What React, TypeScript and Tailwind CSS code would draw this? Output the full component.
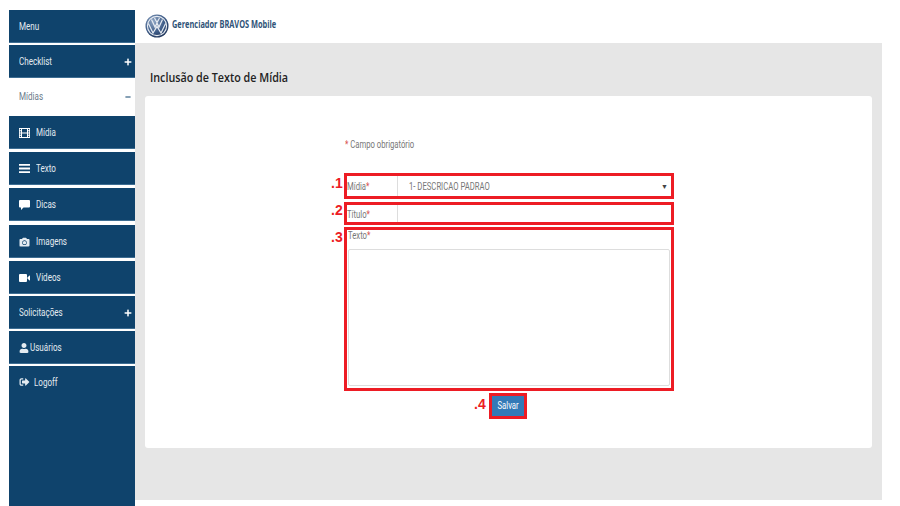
import type { ReactNode } from "react";
import { FaCamera, FaUser, FaSignOutAlt, FaPlus, FaMinus } from "react-icons/fa";

// the original font is a narrow one, none installed, so squeeze Roboto
const T = ({ children, origin = "origin-left" }: { children: ReactNode; origin?: string }) => (
  <span className={`inline-block whitespace-nowrap scale-x-[.7] ${origin}`}>{children}</span>
);

const Logo = () => (
  <svg width="24" height="24" viewBox="0 0 24 24">
    <defs>
      <radialGradient id="vw" cx="35%" cy="30%" r="80%">
        <stop offset="0%" stopColor="#8fa6c4" />
        <stop offset="60%" stopColor="#3c5a86" />
        <stop offset="100%" stopColor="#1b2f52" />
      </radialGradient>
    </defs>
    <circle cx="12" cy="12" r="11.5" fill="url(#vw)" />
    <circle cx="12" cy="12" r="9.6" fill="none" stroke="#e6ebf2" strokeWidth="1.1" />
    <path d="M6.5 5.5 L10 13 L12 9 L14 13 L17.5 5.5 M9.5 4 L12 8.5 L14.5 4 M3.4 9.5 L8 19 L12 12.5 L16 19 L20.6 9.5" fill="none" stroke="#e6ebf2" strokeWidth="1.2" />
  </svg>
);

const FilmIcon = () => (
  <svg width="11" height="10" viewBox="0 0 11 10" className="mr-[6px] shrink-0" fill="#fff">
    <path fillRule="evenodd" d="M0 0h11v10H0z M3 1v3.5h5V1z M3 5.5V9h5V5.5z M.8 1v1.2H2V1z M.8 3.2v1.2H2V3.2z M.8 5.5v1.2H2V5.5z M.8 7.8V9H2V7.8z M9 1v1.2h1.2V1z M9 3.2v1.2h1.2V3.2z M9 5.5v1.2h1.2V5.5z M9 7.8V9h1.2V7.8z" />
  </svg>
);

const ListIcon = () => (
  <svg width="11" height="9" viewBox="0 0 11 9" className="mr-[6px] shrink-0" fill="#fff">
    <path d="M0 0h11v1.8H0z M0 3.6h11v1.8H0z M0 7.2h11V9H0z" />
  </svg>
);

const BubbleIcon = () => (
  <svg width="11" height="10" viewBox="0 0 11 10" className="mr-[6px] shrink-0" fill="#fff">
    <path d="M1 0h9a1 1 0 0 1 1 1v5.5a1 1 0 0 1-1 1H4.5L2 10V7.5H1a1 1 0 0 1-1-1V1a1 1 0 0 1 1-1z" />
  </svg>
);

const VideoIcon = () => (
  <svg width="11" height="8" viewBox="0 0 11 8" className="mr-[6px] shrink-0" fill="#fff">
    <path d="M0 1a1 1 0 0 1 1-1h6a1 1 0 0 1 1 1v6a1 1 0 0 1-1 1H1a1 1 0 0 1-1-1z M8.5 3.2L11 1.2v5.6L8.5 4.8z" />
  </svg>
);

const Item = ({ children, h = "h-[33px]", mt = "mt-0", sign }: { children: ReactNode; h?: string; mt?: string; sign?: boolean }) => (
  <div className={`${h} ${mt} bg-[#0f436c] border-b border-[#3d6d92] text-[#e4ebf1] text-[11.5px] font-['Roboto',sans-serif] flex items-center justify-between pt-[1px] pl-[10px] pr-[3px]`}>
    <div className="flex items-center">{children}</div>
    {sign && <FaPlus className="text-white w-[8px] h-[8px]" />}
  </div>
);

const Sidebar = () => (
  <aside className="w-[126px] ml-[9px] pt-[10px] flex flex-col shrink-0">
    <Item><T>Menu</T></Item>
    <Item mt="mt-[2px]" sign><T>Checklist</T></Item>
    <div className="h-[38px] bg-white text-[#6b7a8a] text-[11.5px] font-['Roboto',sans-serif] flex items-center justify-between pl-[10px] pr-[4px]">
      <T>Mídias</T>
      <FaMinus className="text-[#0f436c] w-[6px] h-[6px]" />
    </div>
    <Item><FilmIcon /><T>Mídia</T></Item>
    <Item mt="mt-[3px]"><ListIcon /><T>Texto</T></Item>
    <Item mt="mt-[3px]"><BubbleIcon /><T>Dicas</T></Item>
    <Item mt="mt-[4px]"><FaCamera className="w-[11px] h-[10px] mr-[6px]" /><T>Imagens</T></Item>
    <Item mt="mt-[3px]"><VideoIcon /><T>Vídeos</T></Item>
    <Item mt="mt-[2px]" sign><T>Solicitações</T></Item>
    <Item mt="mt-[2px]"><FaUser className="w-[10px] h-[10px] mr-[1px]" /><T>Usuários</T></Item>
    <div className="mt-[2px] flex-1 bg-[#0f436c] text-[#e4ebf1] text-[11.5px] font-['Roboto',sans-serif] flex items-start pt-[8px] pl-[10px]">
      <FaSignOutAlt className="w-[11px] h-[10px] mr-[4px] mt-[3px]" />
      <T>Logoff</T>
    </div>
  </aside>
);

const Mark = ({ n, cls }: { n: string; cls: string }) => (
  <span className={`absolute ${cls} text-[#ed1c24] text-[14px] font-bold leading-none font-['Liberation_Sans',sans-serif]`}>{n}</span>
);

const Required = () => <span className="text-[#d9534f]">*</span>;

const Form = () => (
  <div className="w-[330px] ml-[199px] text-[#777] text-[11px] font-['Roboto',sans-serif]">
    <p className="mt-[42px] ml-[1px] h-[35px] leading-[14px]">
      <T><Required /> Campo obrigatório</T>
    </p>
    <div className="relative h-[26px] border-[3px] border-[#ed1c24] flex items-center">
      <Mark n=".1" cls="-left-[16px] top-[0px]" />
      <div className="w-[51px] pt-[3px] h-full border-r border-[#ddd] flex items-center"><T>Mídia<Required /></T></div>
      <div className="flex-1 pl-[11px] pt-[3px] flex items-center justify-between pr-[3px]">
        <T>1- DESCRICAO PADRAO</T>
        <span className="text-[#444] text-[7px]">▼</span>
      </div>
    </div>
    <div className="relative mt-[3px] h-[23px] border-[3px] border-[#ed1c24] flex items-center">
      <Mark n=".2" cls="-left-[16px] top-[-2px]" />
      <div className="w-[51px] pt-[3px] h-full border-r border-[#ddd] flex items-center"><T>Título<Required /></T></div>
    </div>
    <div className="relative mt-[2px] h-[164px] border-[3px] border-[#ed1c24] px-[1px]">
      <Mark n=".3" cls="-left-[16px] top-[0px]" />
      <div className="h-[19px] leading-[12px]"><T>Texto<Required /></T></div>
      <div className="h-[137px] border border-[#ddd] rounded-[2px]" />
    </div>
    <div className="relative mt-[2px] flex">
      <Mark n=".4" cls="left-[130px] top-[4px]" />
      <button className="ml-[145px] w-[38px] h-[26px] border-[3px] border-[#ed1c24] bg-[#337ab7] text-white text-[11px] flex items-center justify-center">
        <T origin="origin-center">Salvar</T>
      </button>
    </div>
  </div>
);

const App = () => (
  <div className="w-[900px] h-[506px] bg-white flex overflow-hidden">
    <Sidebar />
    <main className="w-[747px] h-[500px] flex flex-col">
      <header className="h-[43px] bg-white flex items-center pl-[10px] pt-[8px] gap-[3px] shrink-0">
        <Logo />
        <span className="inline-block whitespace-nowrap scale-x-[.74] origin-left text-[#2f5378] text-[10px] font-bold font-['Open_Sans',sans-serif] -mt-[3px]">Gerenciador BRAVOS Mobile</span>
      </header>
      <div className="flex-1 bg-[#e6e6e6] px-[10px] flex flex-col">
        <h1 className="mt-[27px] h-[26px] ml-[5px] text-[12.5px] leading-[16px] font-semibold text-[#222] font-['Open_Sans',sans-serif]">
          <span className="inline-block whitespace-nowrap scale-x-[.86] origin-left">Inclusão de Texto de Mídia</span>
        </h1>
        <div className="h-[352px] bg-white rounded-[3px]">
          <Form />
        </div>
      </div>
    </main>
  </div>
);

export default App;
